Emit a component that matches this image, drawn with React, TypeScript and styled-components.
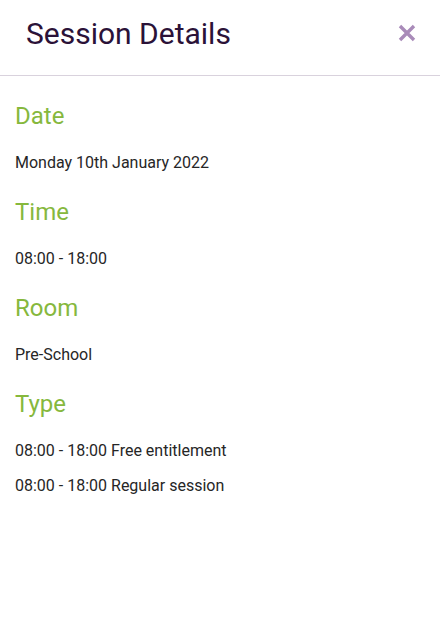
import styled, { createGlobalStyle } from "styled-components";

const GlobalStyle = createGlobalStyle`
  body {
    margin: 0;
    background: #fff;
    font-family: Roboto, "Liberation Sans", sans-serif;
  }
`;

type Section = { title: string; lines: string[] };

const sections: Section[] = [
  { title: "Date", lines: ["Monday 10th January 2022"] },
  { title: "Time", lines: ["08:00 - 18:00"] },
  { title: "Room", lines: ["Pre-School"] },
  {
    title: "Type",
    lines: ["08:00 - 18:00 Free entitlement", "08:00 - 18:00 Regular session"],
  },
];

const App: React.FC = () => {
  return (
    <>
      <GlobalStyle />
      <Panel>
        <Header>
          <Title>Session Details</Title>
          <CloseButton aria-label="Close">
            <svg width="18" height="18" viewBox="0 0 18 18">
              <path
                d="M2 2 L16 16 M16 2 L2 16"
                stroke="#a98bb9"
                strokeWidth="3.4"
              />
            </svg>
          </CloseButton>
        </Header>
        <Body>
          {sections.map((section) => (
            <Block key={section.title}>
              <Heading>{section.title}</Heading>
              {section.lines.map((line) => (
                <Line key={line}>{line}</Line>
              ))}
            </Block>
          ))}
        </Body>
      </Panel>
    </>
  );
};

export default App;

const Panel = styled.div`
  width: 440px;
  min-height: 618px;
  background: #fff;
`;

const Header = styled.div`
  display: flex;
  align-items: center;
  justify-content: space-between;
  height: 76px;
  padding: 0 24px 9px 26px;
  box-sizing: border-box;
  border-bottom: 1px solid #d9d2dd;
`;

const Title = styled.h1`
  margin: 0;
  font-size: 30px;
  font-weight: 400;
  color: #2b1238;
`;

const CloseButton = styled.button`
  display: flex;
  align-items: center;
  justify-content: center;
  border: none;
  background: none;
  padding: 0;
  cursor: pointer;
`;

const Body = styled.div`
  display: flex;
  flex-direction: column;
  padding: 24px 15px 0;
  gap: 23px;
`;

const Block = styled.div`
  display: flex;
  flex-direction: column;
  gap: 15px;
`;

const Heading = styled.h2`
  margin: 2px 0 8px;
  font-size: 24px;
  font-weight: 400;
  color: #86b83d;
  line-height: 28px;
`;

const Line = styled.p`
  margin: 0;
  font-size: 16px;
  line-height: 20px;
  color: #262626;
`;
